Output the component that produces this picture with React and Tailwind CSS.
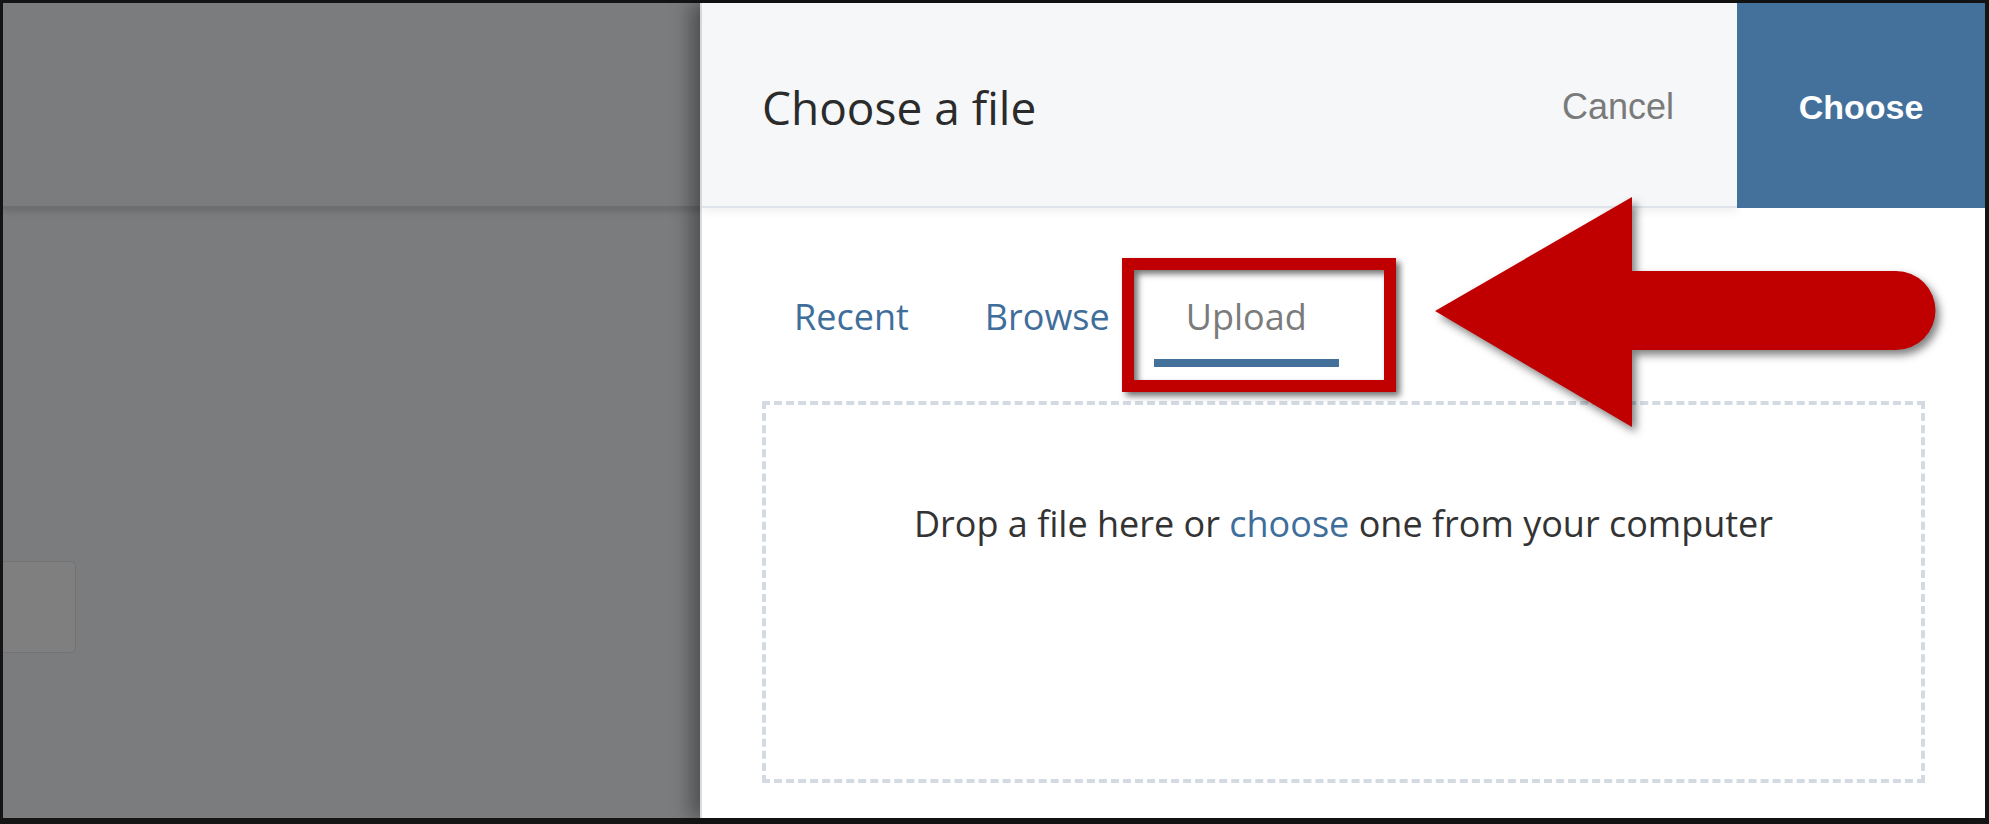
const openSans = { fontFamily: '"Open Sans", "Liberation Sans", sans-serif' };

function Tab({ label, active }) {
    return (
        <div className="flex flex-col">
            <span
                className={`px-[32px] pb-[18px] text-[36px] leading-[48px] ${active ? 'text-[#7b7b7b]' : 'text-[#3f6e9b]'}`}
                style={openSans}
            >
                {label}
            </span>
            <div className={`h-[8px] w-full ${active ? 'bg-[#44719b]' : 'bg-transparent'}`} />
        </div>
    );
}

function Arrow() {
    return (
        <svg
            className="pointer-events-none absolute left-[720px] top-[182px] z-30"
            width="540"
            height="260"
            viewBox="0 0 540 260"
            style={{ filter: 'drop-shadow(4px 5px 4px rgba(0,0,0,0.5))' }}
        >
            <path
                d="M13 126 L210 12 L210 86 L474 86 A39.5 39.5 0 0 1 474 165 L210 165 L210 242 Z"
                fill="#c00000"
                strokeLinejoin="round"
            />
        </svg>
    );
}

export default function App() {
    return (
        <div className="flex h-[824px] w-[1989px] border-t-[3px] border-r-[4px] border-b-[6px] border-l-[3px] border-[#151515] bg-[#151515]">
            {/* dimmed page behind the drawer */}
            <div className="flex w-[697px] shrink-0 flex-col bg-[#7b7c7e]">
                <div className="h-[206px] shrink-0 border-b-[3px] border-[#6d6e70] shadow-[0_3px_6px_rgba(0,0,0,0.12)]" />
                <div className="mt-[352px] h-[92px] w-[73px] rounded-r-[5px] border border-l-0 border-[#717274] bg-[#7f7f80]" />
            </div>

            {/* drawer */}
            <div className="relative z-10 flex flex-1 flex-col border-l-2 border-[#dcdcdc] bg-white shadow-[-10px_0_18px_rgba(0,0,0,0.35)]">
                <div className="flex h-[205px] shrink-0 items-stretch">
                    <div className="flex flex-1 items-center justify-between border-b-2 border-[#dfe4ea] bg-[#f5f7f9] pl-[60px] pr-[63px] shadow-[0_4px_8px_rgba(0,0,0,0.06)]">
                        <h1 className="pt-[4px] text-[46px] leading-[58px] text-[#2b2b2b]" style={openSans}>
                            Choose a file
                        </h1>
                        <button
                            className="pt-[4px] text-[36px] leading-[44px] text-[#7a7a7a]"
                            style={{ fontFamily: '"Liberation Sans", Arial, sans-serif' }}
                        >
                            Cancel
                        </button>
                    </div>
                    <button
                        className="flex w-[248px] items-center justify-center bg-[#44719b] pt-[4px] text-[34px] font-bold text-white"
                        style={{ fontFamily: '"Liberation Sans", Arial, sans-serif' }}
                    >
                        Choose
                    </button>
                </div>

                <div className="ml-[60px] mt-[85px] flex gap-[12px]">
                    <Tab label="Recent" />
                    <Tab label="Browse" />
                    <Tab label="Upload" active />
                </div>

                <div className="mx-[60px] mt-[34px] h-[382px] border-[4px] border-dashed border-[#d3dae2] pt-[95px] text-center">
                    <p className="text-[36px] leading-[48px] text-[#333]" style={openSans}>
                        Drop a file here or <span className="text-[#3f6e9b]">choose</span> one from your computer
                    </p>
                </div>

                <div
                    className="pointer-events-none absolute left-[420px] top-[255px] z-20 h-[134px] w-[274px] border-[12px] border-[#c00000]"
                    style={{ filter: 'drop-shadow(4px 4px 3px rgba(0,0,0,0.55))' }}
                />
                <Arrow />
            </div>
        </div>
    );
}
